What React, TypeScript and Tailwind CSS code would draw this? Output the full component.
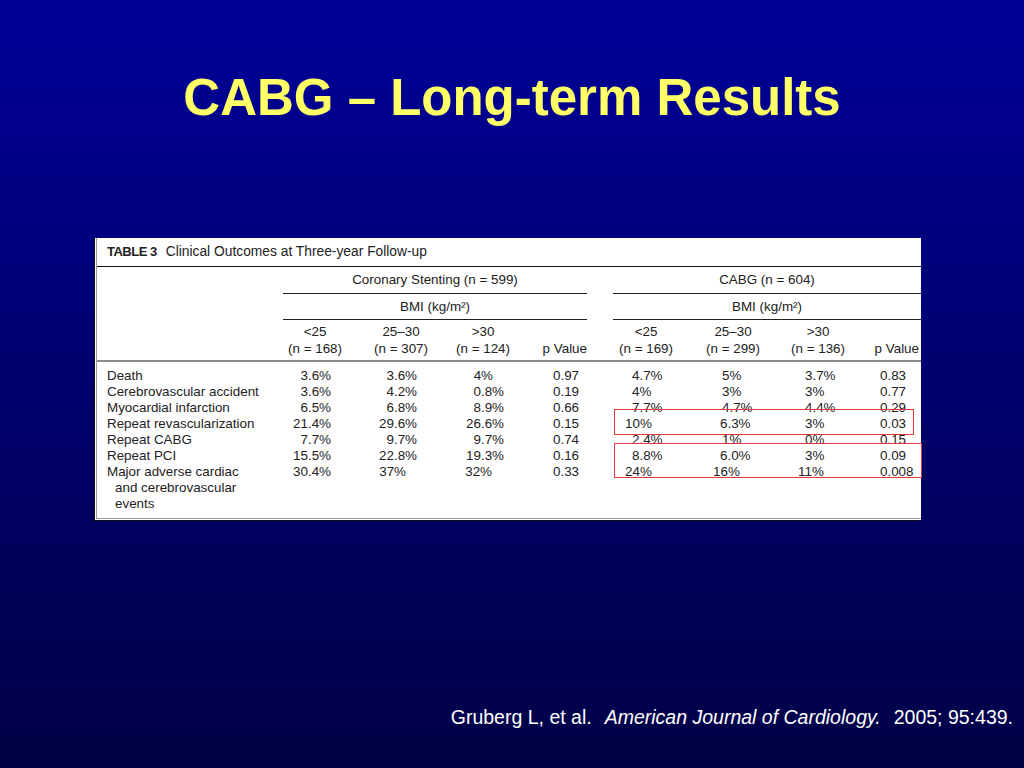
const cols =
  "grid grid-cols-[186px_59px_86px_82px_77px_26px_60px_87px_85px_74px_2px]";

type Cell = string | [string, string];

const stentDefaults = ["text-right pr-[11px]", "text-right pr-[11px]", "text-right pr-[6px]", "pl-[43px]"];
const cabgDefaults = ["pl-[19px]", "pl-[49px]", "pl-[45px]", "pl-[35px]"];

const rows: { label: string[]; s: Cell[]; c: Cell[] }[] = [
  { label: ["Death"], s: ["3.6%", "3.6%", ["4%", "text-right pr-[17px]"], "0.97"], c: ["4.7%", "5%", "3.7%", "0.83"] },
  { label: ["Cerebrovascular accident"], s: ["3.6%", "4.2%", "0.8%", "0.19"], c: ["4%", "3%", "3%", "0.77"] },
  { label: ["Myocardial infarction"], s: ["6.5%", "6.8%", "8.9%", "0.66"], c: ["7.7%", "4.7%", "4.4%", "0.29"] },
  {
    label: ["Repeat revascularization"],
    s: ["21.4%", "29.6%", "26.6%", "0.15"],
    c: [["10%", "pl-[12px]"], ["6.3%", "pl-[47px]"], "3%", "0.03"],
  },
  { label: ["Repeat CABG"], s: ["7.7%", "9.7%", "9.7%", "0.74"], c: ["2.4%", "1%", "0%", "0.15"] },
  { label: ["Repeat PCI"], s: ["15.5%", "22.8%", "19.3%", "0.16"], c: ["8.8%", ["6.0%", "pl-[47px]"], "3%", "0.09"] },
  {
    label: ["Major adverse cardiac", "and cerebrovascular", "events"],
    s: ["30.4%", ["37%", "text-right pr-[22px]"], ["32%", "text-right pr-[18px]"], "0.33"],
    c: [["24%", "pl-[12px]"], ["16%", "pl-[40px]"], ["11%", "pl-[38px]"], "0.008"],
  },
];

function Value({ cell, base }: { cell: Cell; base: string }) {
  const [text, cls] = Array.isArray(cell) ? cell : [cell, base];
  return <div className={cls}>{text}</div>;
}

function Head({ top, bottom }: { top?: string; bottom: string }) {
  return (
    <div className="flex justify-end">
      <div className="flex flex-col items-center">
        <span className="h-[17px]">{top}</span>
        <span>{bottom}</span>
      </div>
    </div>
  );
}

export default function App() {
  return (
    <div className="flex h-[768px] w-[1024px] flex-col overflow-hidden bg-linear-to-b from-[#000099] to-[#000046] font-['Liberation_Sans',Arial,sans-serif]">
      <h1 className="pt-[72px] text-center text-[51px] font-bold leading-none text-[#ffff66]">
        CABG – Long-term Results
      </h1>

      <div className="relative ml-[94px] mt-[115px] w-[827px] border-b border-l border-[#111] bg-white text-[13.4px] leading-[16px] text-[#222]">
        <div className="mb-[1px] ml-[1px] border-b border-l border-[#9a9a9a]">
          <div className="flex h-[29px] items-center border-b border-[#111] pl-[10px]">
            <span className="text-[13px] font-bold tracking-[-0.5px]">TABLE 3</span>
            <span className="ml-[9px] text-[13.8px]">Clinical Outcomes at Three-year Follow-up</span>
          </div>

          <div className={cols}>
            <div className="col-span-4 col-start-2 flex h-[27px] items-center justify-center border-b border-[#222]">
              Coronary Stenting (n = 599)
            </div>
            <div className="col-span-5 col-start-7 flex h-[27px] items-center justify-center border-b border-[#222]">
              CABG (n = 604)
            </div>
          </div>

          <div className={cols}>
            <div className="col-span-4 col-start-2 flex h-[26px] items-center justify-center border-b border-[#222]">
              BMI (kg/m²)
            </div>
            <div className="col-span-5 col-start-7 flex h-[26px] items-center justify-center border-b border-[#222]">
              BMI (kg/m²)
            </div>
          </div>

          <div className={`${cols} h-[42px] border-b-2 border-[#8c8c8c] pt-[4px]`}>
            <div />
            <Head top="<25" bottom="(n = 168)" />
            <Head top="25–30" bottom="(n = 307)" />
            <Head top=">30" bottom="(n = 124)" />
            <Head bottom="p Value" />
            <div />
            <Head top="<25" bottom="(n = 169)" />
            <Head top="25–30" bottom="(n = 299)" />
            <Head top=">30" bottom="(n = 136)" />
            <Head bottom="p Value" />
            <div />
          </div>

          <div className="pb-[6px] pt-[6px]">
            {rows.map((r) => (
              <div key={r.label[0]} className={cols}>
                <div className="pl-[10px]">
                  {r.label.map((l, i) => (
                    <div key={l} className={i > 0 ? "pl-[8px]" : ""}>
                      {l}
                    </div>
                  ))}
                </div>
                {r.s.map((v, i) => (
                  <Value key={i} cell={v} base={stentDefaults[i]} />
                ))}
                <div />
                {r.c.map((v, i) => (
                  <Value key={i} cell={v} base={cabgDefaults[i]} />
                ))}
                <div />
              </div>
            ))}
          </div>
        </div>

        <div className="pointer-events-none absolute left-[519px] top-[171px] h-[26px] w-[300px] border-[1.5px] border-[#e2383c]" />
        <div className="pointer-events-none absolute left-[519px] top-[205px] h-[35px] w-[308px] border-[1.5px] border-[#e2383c]" />
      </div>

      <div className="mt-auto flex justify-end pb-[39px] pr-[11px] text-[19.5px] leading-[24px] text-white">
        <span>Gruberg L, et al.</span>
        <span className="ml-[13px] italic">American Journal of Cardiology.</span>
        <span className="ml-[13px]">2005; 95:439.</span>
      </div>
    </div>
  );
}
